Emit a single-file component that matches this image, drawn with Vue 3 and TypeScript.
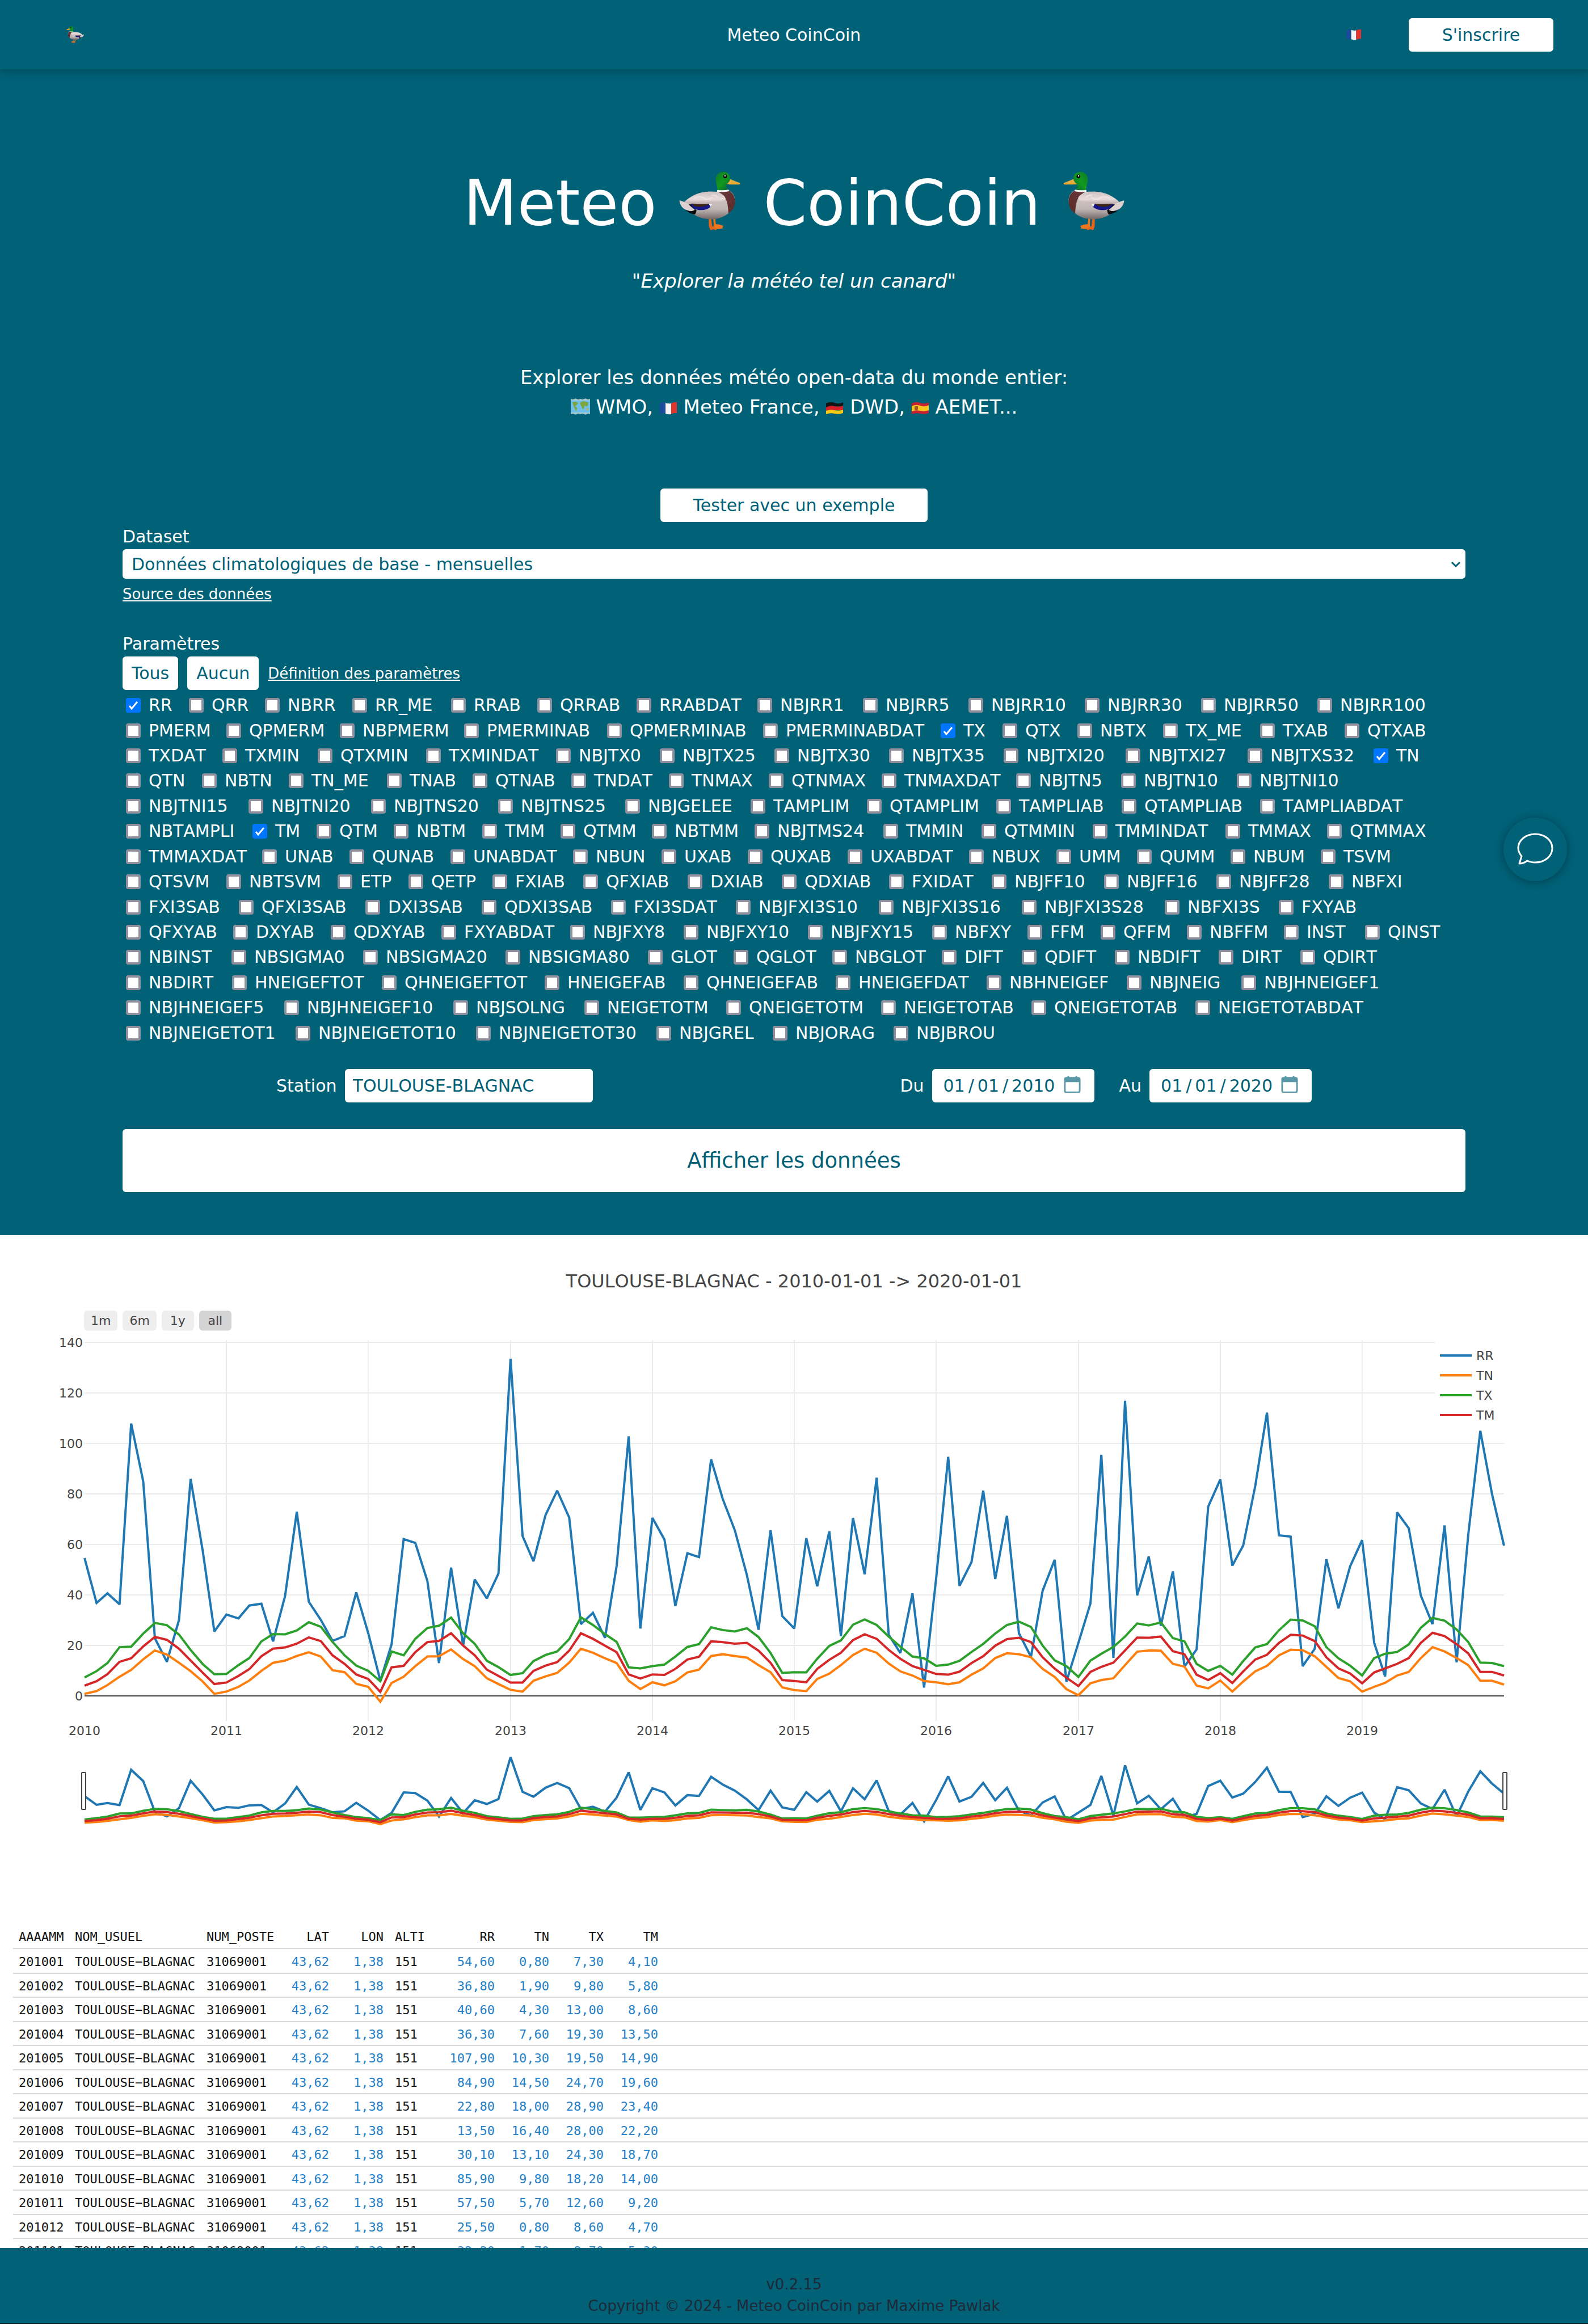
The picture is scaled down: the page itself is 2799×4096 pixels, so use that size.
<script setup lang="ts">
import { ref } from 'vue'

/* ---------- form ---------- */
const params: string[] = (
  'RR QRR NBRR RR_ME RRAB QRRAB RRABDAT NBJRR1 NBJRR5 NBJRR10 NBJRR30 NBJRR50 NBJRR100 ' +
  'PMERM QPMERM NBPMERM PMERMINAB QPMERMINAB PMERMINABDAT TX QTX NBTX TX_ME TXAB QTXAB ' +
  'TXDAT TXMIN QTXMIN TXMINDAT NBJTX0 NBJTX25 NBJTX30 NBJTX35 NBJTXI20 NBJTXI27 NBJTXS32 TN ' +
  'QTN NBTN TN_ME TNAB QTNAB TNDAT TNMAX QTNMAX TNMAXDAT NBJTN5 NBJTN10 NBJTNI10 ' +
  'NBJTNI15 NBJTNI20 NBJTNS20 NBJTNS25 NBJGELEE TAMPLIM QTAMPLIM TAMPLIAB QTAMPLIAB TAMPLIABDAT ' +
  'NBTAMPLI TM QTM NBTM TMM QTMM NBTMM NBJTMS24 TMMIN QTMMIN TMMINDAT TMMAX QTMMAX ' +
  'TMMAXDAT UNAB QUNAB UNABDAT NBUN UXAB QUXAB UXABDAT NBUX UMM QUMM NBUM TSVM ' +
  'QTSVM NBTSVM ETP QETP FXIAB QFXIAB DXIAB QDXIAB FXIDAT NBJFF10 NBJFF16 NBJFF28 NBFXI ' +
  'FXI3SAB QFXI3SAB DXI3SAB QDXI3SAB FXI3SDAT NBJFXI3S10 NBJFXI3S16 NBJFXI3S28 NBFXI3S FXYAB ' +
  'QFXYAB DXYAB QDXYAB FXYABDAT NBJFXY8 NBJFXY10 NBJFXY15 NBFXY FFM QFFM NBFFM INST QINST ' +
  'NBINST NBSIGMA0 NBSIGMA20 NBSIGMA80 GLOT QGLOT NBGLOT DIFT QDIFT NBDIFT DIRT QDIRT ' +
  'NBDIRT HNEIGEFTOT QHNEIGEFTOT HNEIGEFAB QHNEIGEFAB HNEIGEFDAT NBHNEIGEF NBJNEIG NBJHNEIGEF1 ' +
  'NBJHNEIGEF5 NBJHNEIGEF10 NBJSOLNG NEIGETOTM QNEIGETOTM NEIGETOTAB QNEIGETOTAB NEIGETOTABDAT ' +
  'NBJNEIGETOT1 NBJNEIGETOT10 NBJNEIGETOT30 NBJGREL NBJORAG NBJBROU'
).split(' ')

const selected = ref<string[]>(['RR', 'TX', 'TN', 'TM'])
const dataset = ref('mensuelles')
const station = ref('TOULOUSE-BLAGNAC')
const from = ref('2010-01-01')
const to = ref('2020-01-01')
const range = ref('all')
const ranges = ['1m', '6m', '1y', 'all']

// Character advances in thousandths of an em: the width of a choice follows its code.
const advance: Record<string, number> = {
  A: 684, B: 686, C: 698, D: 771, E: 632, F: 575, G: 775, H: 751, I: 421, J: 455, K: 693,
  L: 557, M: 843, N: 748, O: 787, P: 603, Q: 787, R: 695, S: 684, T: 616, U: 732, V: 684,
  X: 685, Y: 615, _: 636,
}
function choiceWidth(code: string): string {
  const em = [...code].reduce((sum, c) => sum + (advance[c] ?? 636), 0) / 1000
  return Math.round(em * 29.6 + 70) + 'px'
}

/* ---------- series, monthly from 2010-01 ---------- */
const RR = [
  54.6, 36.8, 40.6, 36.3, 107.9, 84.9, 22.8, 13.5, 30.1, 85.9, 57.5, 25.5,
  32.2, 30.7, 35.8, 36.5, 21.6, 39.6, 72.9, 37.3, 30.1, 21.8, 23.7, 41,
  24.8, 6, 20.4, 62.1, 60.6, 45.5, 13, 50.8, 20, 46.1, 38.6, 48.5,
  133.5, 63.3, 53.3, 71.6, 81.3, 70.6, 28.4, 32.9, 23, 51.5, 102.8, 26.7,
  70.5, 61.9, 35.6, 56.5, 55, 93.7, 78, 65.6, 47.9, 26.2, 65.6, 31.6,
  26.7, 62.5, 43.4, 65.1, 23.7, 70.5, 48.2, 86.4, 24.2, 17, 40.6, 3.3,
  46.7, 94.7, 43.6, 53, 81.3, 46.3, 71.3, 24.8, 15.5, 41.7, 53.9, 5.6,
  21, 36.6, 95.5, 15.1, 116.9, 39.8, 55.2, 27.8, 49.3, 11.6, 18.4, 75,
  85.7, 51.6, 59.6, 83.2, 112.2, 63.6, 63.1, 11.8, 18.7, 54.1, 34.7, 51.3,
  61.7, 21, 7.7, 72.7, 66.4, 39.7, 28.4, 67.5, 13.3, 64, 105, 80, 59.5,
]
const TN = [
  0.8, 1.9, 4.3, 7.6, 10.3, 14.5, 18, 16.4, 13.1, 9.8, 5.7, 0.8,
  1.7, 3.6, 6.1, 9.9, 13.1, 14, 15.8, 17.3, 15.6, 10.2, 9.4, 4.8,
  3.6, -2.3, 5.1, 7.6, 11.8, 15.6, 15.7, 18.4, 14.6, 11.8, 7, 4.7,
  2.4, 1.7, 6, 7.7, 9.1, 13.2, 18.7, 17.1, 14.9, 13, 6, 2.7,
  5.4, 4.2, 5.8, 9.3, 10.4, 15.8, 16.5, 15.8, 15.2, 12.2, 9.4, 3.4,
  2.3, 1.9, 6.7, 8.8, 12.2, 16.2, 18.7, 17.1, 12.8, 9.7, 8.1, 5.9,
  5.4, 4.6, 5.4, 8.4, 10.9, 15, 16.9, 16.5, 15.3, 10.7, 7.5, 2.7,
  0.3, 5, 6.3, 7, 12.2, 17.5, 18, 17.9, 12.7, 11.6, 4.1, 3,
  6.1, 1.7, 5.7, 9.7, 11.9, 16.1, 18.3, 18.1, 15.7, 11.5, 7.1, 5.8,
  1.7, 3.6, 5.2, 8.1, 9.5, 15, 19.3, 17.6, 15, 12.2, 6, 6, 4.5,
]
const TX = [
  7.3, 9.8, 13, 19.3, 19.5, 24.7, 28.9, 28, 24.3, 18.2, 12.6, 8.6,
  8.7, 12.2, 15, 21.6, 24.5, 24.4, 25.9, 29.2, 27.4, 21.4, 16.1, 12,
  9.9, 5.8, 17.6, 16.1, 22.6, 26.9, 27.8, 31, 24.8, 20.6, 13.9, 11.4,
  8.3, 9, 13.8, 16.2, 17.6, 22.5, 31.1, 28.1, 24.5, 21.4, 11.3, 10.9,
  11.8, 12.4, 15.6, 19.4, 20.5, 27.2, 26.1, 25.5, 26.8, 23.3, 17, 9.1,
  9.4, 9.3, 14.7, 19.8, 22, 28.2, 30.3, 28.1, 23.5, 19.5, 15.6, 14.9,
  11.9, 12.4, 13.9, 17.4, 20.6, 24.7, 28.1, 29.4, 27.3, 19.9, 14.1, 11.8,
  7.5, 14, 16.7, 19.4, 23.5, 28.7, 27.9, 29.1, 22.9, 21.6, 12.7, 9.9,
  11.9, 8.4, 13.8, 19.2, 20.5, 26, 30.2, 29.9, 27.6, 19.3, 14.9, 12,
  8.1, 15, 16.7, 17.4, 20.4, 27, 30.9, 29.8, 26.3, 21.3, 13.2, 13, 11.8,
]
const TM = [
  4.1, 5.8, 8.6, 13.5, 14.9, 19.6, 23.4, 22.2, 18.7, 14, 9.2, 4.7,
  5.3, 7.9, 10.6, 15.7, 18.7, 19.2, 20.7, 23.2, 21.7, 16.1, 12.7, 8.5,
  6.7, 1.6, 11.3, 11.9, 17.3, 21.3, 21.8, 24.8, 19.9, 16.1, 10.4, 7.9,
  5.3, 5.3, 9.9, 12, 13.4, 17.9, 24.8, 22.6, 19.9, 17.3, 8.5, 6.9,
  8.5, 8.3, 10.7, 14.4, 15.5, 21.6, 21.3, 20.7, 21, 17.9, 13.1, 6.3,
  5.9, 5.4, 10.7, 14.3, 17.1, 22.1, 24.4, 22.6, 18.2, 14.7, 11.8, 10.3,
  8.7, 8.4, 9.6, 13, 15.7, 19.9, 22.5, 23, 21.3, 15.3, 10.8, 7.2,
  3.9, 9.5, 11.5, 13.2, 18, 23.1, 23, 23.5, 17.7, 16.5, 8.4, 6.3,
  9, 5.1, 9.7, 14.4, 16.3, 21, 24.2, 23.9, 21.7, 15.3, 10.9, 8.9,
  5, 9.3, 10.9, 12.7, 15, 21, 25, 23.7, 20.5, 16.8, 9.5, 9.5, 8.1,
]
const series = [
  { name: 'RR', color: '#1f77b4', data: RR },
  { name: 'TN', color: '#ff7f0e', data: TN },
  { name: 'TX', color: '#2ca02c', data: TX },
  { name: 'TM', color: '#d62728', data: TM },
]

/* ---------- scales ---------- */
const left = 149
const right = 2651
const t0 = Date.UTC(2010, 0, 1)
const t1 = Date.UTC(2020, 0, 1)
const x = (t: number): number => left + ((t - t0) / (t1 - t0)) * (right - left)
const y = (v: number): number => 639 - v * 4.45
const ySmall = (v: number): number => 863 - v * 0.869

function line(data: number[], scale: (v: number) => number): string {
  return data.map((v, i) => x(Date.UTC(2010, i, 1)).toFixed(1) + ',' + scale(v).toFixed(1)).join(' ')
}
const years = Array.from({ length: 10 }, (_, i) => ({ label: 2010 + i, x: Math.round(x(Date.UTC(2010 + i, 0, 1))) }))
const ticks = [20, 40, 60, 80, 100, 120, 140]

/* ---------- table ---------- */
const fmt = (v: number): string => v.toFixed(2).replace('.', ',')
const rows = Array.from({ length: 13 }, (_, i) => ({
  month: String(2010 + Math.floor(i / 12)) + String((i % 12) + 1).padStart(2, '0'),
  values: [RR[i], TN[i], TX[i], TM[i]].map(fmt),
}))
</script>

<template>
  <div class="page">
    <svg class="defs" aria-hidden="true">
      <defs>
        <linearGradient id="head" x1="0" y1="0" x2="1" y2="1">
          <stop offset="0" stop-color="#0f7a2a" /><stop offset=".5" stop-color="#129a1e" /><stop offset="1" stop-color="#045a42" />
        </linearGradient>
        <linearGradient id="chest" x1="0" y1="0" x2="1" y2="1">
          <stop offset="0" stop-color="#6b3a3c" /><stop offset="1" stop-color="#5a2a28" />
        </linearGradient>
        <linearGradient id="belly" x1="0" y1="0" x2="0" y2="1">
          <stop offset="0" stop-color="#d8cfcd" /><stop offset=".65" stop-color="#bfb6b3" /><stop offset="1" stop-color="#75696a" />
        </linearGradient>
        <linearGradient id="wing" x1="0" y1="0" x2="0" y2="1">
          <stop offset="0" stop-color="#cfc2c3" /><stop offset=".6" stop-color="#e6dadb" /><stop offset="1" stop-color="#b9a7a7" />
        </linearGradient>
        <symbol id="duck" viewBox="32 30 352 344">
          <path d="M202 300l14 2 6 44 12 6 18 8-8 10-16-6-16 6-9-22z" fill="#e8641b" />
          <path d="M228 298l12 1 3 36 22 2 22 8-6 8 4 6-30 4-26-12 2-14z" fill="#f0761f" />
          <path d="M246 148C210 146 160 146 120 166C96 178 76 190 62 206C64 240 96 270 132 288C170 308 236 314 284 292C330 270 352 236 354 200C354 176 340 150 318 140z" fill="url(#belly)" />
          <path d="M254 146L318 140C344 156 356 184 354 208C352 236 338 260 316 273C314 240 312 210 298 184C288 166 270 156 254 146z" fill="url(#chest)" />
          <path d="M33 198C60 204 84 214 100 234C112 246 122 252 128 258C100 264 74 256 56 244C40 230 34 214 33 198z" fill="#ddd0d0" />
          <path d="M66 254C90 262 110 262 122 252L86 222L98 220L132 256L124 278C110 280 88 270 66 254z" fill="#0a0a0c" />
          <path d="M96 218C130 224 170 222 206 218L216 232C190 258 142 260 112 242z" fill="#15178a" />
          <path d="M100 216L204 216C190 236 146 240 118 230z" fill="#3c2417" />
          <path d="M202 216L222 218L212 236z" fill="#f2ecec" />
          <path d="M62 208C90 180 140 150 200 147C250 146 296 162 298 186C298 206 240 212 200 218C150 222 100 220 62 208z" fill="url(#wing)" />
          <path d="M120 184q30-16 58 2M180 190q20 6 40-8M222 168q20-2 30 10" fill="none" stroke="#f3eaea" stroke-width="9" stroke-linecap="round" opacity=".6" />
          <path d="M252 146C256 120 240 96 243 72C246 46 266 32 288 33C314 34 328 54 326 78C324 98 306 100 304 112C304 122 312 132 318 142C296 148 272 148 252 146z" fill="url(#head)" />
          <path d="M252 137C274 140 296 140 316 136L322 144C300 150 272 150 250 147z" fill="#f4f4f4" />
          <path d="M326 74C340 82 364 90 382 97C384 102 382 106 374 106C352 106 326 108 306 104C316 96 324 86 326 74z" fill="#e6ac3c" />
          <circle cx="297" cy="59" r="11" fill="#050505" /><circle cx="296" cy="56" r="4" fill="#fff" />
        </symbol>
        <symbol id="fr" viewBox="0 0 32 23">
          <path d="M1 3Q6 0 11 2V21Q6 19 1 22z" fill="#1b4a9c" /><path d="M11 2Q16 4 21 3V22Q16 23 11 21z" fill="#f4f4f4" /><path d="M21 3Q26 0 31 1V20Q26 19 21 22z" fill="#e0352f" />
        </symbol>
        <symbol id="de" viewBox="0 0 32 23">
          <path d="M1 3Q8 -1 16 2T31 1V7Q24 9 16 8T1 10z" fill="#141414" /><path d="M1 10Q8 6 16 8T31 7V14Q24 16 16 15T1 16z" fill="#d81f26" /><path d="M1 16Q8 13 16 15T31 14V20Q24 23 16 21T1 22z" fill="#f7c912" />
        </symbol>
        <symbol id="es" viewBox="0 0 32 23">
          <path d="M1 3Q8 -1 16 2T31 1V20Q24 23 16 21T1 22z" fill="#c8202f" /><path d="M1 8Q8 4 16 7T31 6V15Q24 18 16 16T1 17z" fill="#f7c61b" /><path d="M6 8h6v6q-3 3-6 0z" fill="#a8542a" />
        </symbol>
        <symbol id="map" viewBox="0 0 36 30">
          <path d="M0 1Q5 3 9 0Q14 3 18 1Q23 3 27 0Q32 3 36 1V29Q32 27 27 30Q23 27 18 29Q14 27 9 30Q5 27 0 29z" fill="#6fc0ea" />
          <path d="M0 1Q5 3 9 0Q14 3 18 1Q23 3 27 0Q32 3 36 1V4H0zM0 26H36V29Q32 27 27 30Q23 27 18 29Q14 27 9 30Q5 27 0 29z" fill="#a9c9cf" />
          <path d="M3 7l7-1 4 3-4 4-2 1 4 4-2 6-3-6-2-5zM17 8l6-3 9 2 1 5-4 3-3-2-1 5-3 2-3-7z" fill="#7da63c" /><circle cx="31" cy="20" r="2" fill="#c9b04a" />
        </symbol>
      </defs>
    </svg>

    <header class="bar">
      <a href="#" class="home" aria-label="Accueil"><svg class="flip" width="33" height="30"><use href="#duck" /></svg></a>
      <span>Meteo CoinCoin</span>
      <div class="tools">
        <button class="lang" aria-label="Français"><svg width="28" height="20"><use href="#fr" /></svg></button>
        <button class="btn signup">S'inscrire</button>
      </div>
    </header>

    <main>
      <section class="hero">
        <h1>
          <span>Meteo</span><svg width="108" height="105"><use href="#duck" /></svg><span>CoinCoin</span><svg class="flip" width="108" height="105"><use href="#duck" /></svg>
        </h1>
        <p class="tagline">"Explorer la météo tel un canard"</p>
        <p class="intro">
          Explorer les données météo open-data du monde entier:<br />
          <svg width="34" height="29"><use href="#map" /></svg> WMO,
          <svg width="32" height="23"><use href="#fr" /></svg> Meteo France,
          <svg width="32" height="23"><use href="#de" /></svg> DWD,
          <svg width="32" height="23"><use href="#es" /></svg> AEMET...
        </p>
        <button class="btn example">Tester avec un exemple</button>

        <form class="form" @submit.prevent>
          <label class="title" for="dataset">Dataset</label>
          <div class="select">
            <select id="dataset" v-model="dataset">
              <option value="mensuelles">Données climatologiques de base - mensuelles</option>
            </select>
            <svg width="18" height="12" viewBox="0 0 18 12"><path d="M2 2l7 7 7-7" fill="none" stroke="#006177" stroke-width="3" /></svg>
          </div>
          <a href="#" class="source">Source des données</a>

          <p class="title params-title">Paramètres</p>
          <div class="actions">
            <button type="button" class="btn small" @click="selected = [...params]">Tous</button>
            <button type="button" class="btn small" @click="selected = []">Aucun</button>
            <a href="#">Définition des paramètres</a>
          </div>
          <div class="params">
            <label v-for="p in params" :key="p" :style="{ width: choiceWidth(p) }">
              <input v-model="selected" type="checkbox" :value="p" /><span>{{ p }}</span>
            </label>
          </div>

          <div class="filters">
            <div class="field">
              <label for="station">Station</label>
              <input id="station" v-model="station" class="text" type="text" />
            </div>
            <div class="dates">
              <div class="field">
                <label for="from">Du</label>
                <input id="from" v-model="from" class="date" type="date" />
              </div>
              <div class="field">
                <label for="to">Au</label>
                <input id="to" v-model="to" class="date" type="date" />
              </div>
            </div>
          </div>
          <button class="btn submit">Afficher les données</button>
        </form>
      </section>

      <section class="chart">
        <h2>{{ station }} - {{ from }} -&gt; {{ to }}</h2>
        <div class="ranges">
          <button v-for="r in ranges" :key="r" :class="{ on: r === range }" @click="range = r">{{ r }}</button>
        </div>
        <svg class="plot" viewBox="0 0 2799 920" role="img" aria-label="Séries mensuelles">
          <g stroke="#ebebeb" stroke-width="2">
            <line v-for="v in ticks" :key="v" :x1="left" :x2="right" :y1="y(v)" :y2="y(v)" />
            <line v-for="t in years.slice(1)" :key="t.label" :x1="t.x" :x2="t.x" y1="12" y2="683" />
          </g>
          <line :x1="left" :x2="right" :y1="y(0)" :y2="y(0)" stroke="#444" stroke-width="2" />
          <g fill="none" stroke-width="4" stroke-miterlimit="2">
            <polyline v-for="s in series" :key="s.name" :points="line(s.data, y)" :stroke="s.color" />
            <polyline v-for="s in series" :key="s.name" :points="line(s.data, ySmall)" :stroke="s.color" />
          </g>
          <g fill="#fff" stroke="#444" stroke-width="2">
            <rect x="144" y="774" width="7" height="65" rx="1" />
            <rect x="2649" y="774" width="7" height="65" rx="1" />
          </g>
          <rect x="2529" y="12" width="122" height="152" fill="#fff" />
          <g class="tick">
            <text v-for="v in [0, ...ticks]" :key="v" x="146" :y="y(v) + 8" text-anchor="end">{{ v }}</text>
            <text v-for="t in years" :key="t.label" :x="t.x" y="708" text-anchor="middle">{{ t.label }}</text>
            <g v-for="(s, i) in series" :key="s.name">
              <line x1="2538" x2="2594" :y1="39 + i * 35" :y2="39 + i * 35" :stroke="s.color" stroke-width="4" />
              <text x="2602" :y="47 + i * 35">{{ s.name }}</text>
            </g>
          </g>
        </svg>
      </section>

      <section class="data">
        <table>
          <colgroup>
            <col class="c-month" /><col class="c-name" /><col class="c-post" /><col class="c-lat" /><col class="c-val" />
            <col class="c-alt" /><col class="c-val" /><col class="c-val" /><col class="c-val" /><col class="c-val" /><col />
          </colgroup>
          <thead>
            <tr>
              <th>AAAAMM</th><th>NOM_USUEL</th><th>NUM_POSTE</th><th class="num">LAT</th><th class="num">LON</th><th>ALTI</th>
              <th v-for="s in series" :key="s.name" class="num">{{ s.name }}</th><th></th>
            </tr>
          </thead>
          <tbody>
            <tr v-for="r in rows" :key="r.month">
              <td>{{ r.month }}</td><td>TOULOUSE−BLAGNAC</td><td>31069001</td><td class="num">43,62</td><td class="num">1,38</td><td>151</td>
              <td v-for="(v, i) in r.values" :key="i" class="num">{{ v }}</td><td></td>
            </tr>
          </tbody>
        </table>
      </section>
    </main>

    <footer>
      <p>v0.2.15</p>
      <p>Copyright © 2024 - Meteo CoinCoin par Maxime Pawlak</p>
    </footer>

    <button class="chat" aria-label="Discuter">
      <svg width="64" height="58" viewBox="0 0 64 58">
        <path d="M4 54L8 41C3 35 2 31 2 27C2 13 15 2 32 2S62 13 62 27S49 52 32 52C27 52 22 51 18 49C14 52 9 54 4 54Z" fill="none" stroke="#fff" stroke-width="3" stroke-linejoin="round" />
      </svg>
    </button>
  </div>
</template>

<style>
body { margin: 0; background: #fff; }
</style>

<style scoped>
.page { font-family: Verdana, "DejaVu Sans", sans-serif; font-size: 30px; color: #fff; position: relative; }
.page * { box-sizing: border-box; }
.defs { position: absolute; width: 0; height: 0; }
h1, h2, p { margin: 0; font-weight: 400; }
a { color: #fff; }
button, input, select { font: inherit; margin: 0; border: 0; }
.flip { transform: scaleX(-1); }

.btn { height: 59px; border-radius: 6px; background: #fff; color: #006177; padding: 0; text-align: center; }

.bar {
  position: relative; z-index: 1; height: 122px; padding: 0 61px;
  display: grid; grid-template-columns: 1fr auto 1fr; align-items: center;
  background: #006177; box-shadow: 0 4px 16px rgba(0, 0, 0, .25);
}
.home { display: flex; padding-left: 55px; }
.tools { display: flex; justify-content: flex-end; align-items: center; gap: 83px; }
.lang { background: none; padding: 0; display: flex; }
.signup { width: 255px; }

.hero { background: #006177; padding: 171px 216px 76px; display: flex; flex-direction: column; align-items: center; }
h1 { display: flex; align-items: flex-start; gap: 40px; font-size: 110px; line-height: 130px; }
h1 svg { margin-top: 9px; }
.tagline { margin-top: 52px; font-size: 34px; line-height: 40px; font-style: italic; }
.intro { margin-top: 124px; font-size: 34px; line-height: 52px; text-align: center; }
.intro svg { vertical-align: -2px; }
.example { margin-top: 118px; width: 471px; }

.form { align-self: stretch; margin-top: 8px; display: flex; flex-direction: column; align-items: stretch; }
.title { line-height: 36px; }
.select { position: relative; margin-top: 4px; }
.select select {
  appearance: none; width: 100%; height: 52px; padding: 0 16px; border-radius: 6px; background: #fff; color: #006177; display: block;
}
.select svg { position: absolute; right: 8px; top: 21px; }
.source { align-self: flex-start; margin-top: 11px; font-size: 26px; line-height: 32px; }
.params-title { margin-top: 54px; }
.actions { margin-top: 4px; display: flex; align-items: center; gap: 16px; }
.actions a { font-size: 26px; line-height: 32px; }
.small { padding: 0 16px; }
.params {
  margin-top: 5px; min-height: 622px; display: flex; flex-wrap: wrap; align-content: stretch;
  line-height: 44px; font-kerning: none;
}
.params label { display: flex; align-items: center; white-space: nowrap; }
.params input {
  appearance: none; flex: none; width: 26px; height: 26px; margin: 0 14px 0 6px;
  border: 4px solid #8f8f9d; border-radius: 4px; background: #fff;
}
.params input:checked {
  border-color: #0075ff;
  background: #0075ff url("data:image/svg+xml,%3Csvg xmlns='http://www.w3.org/2000/svg' viewBox='0 0 18 18'%3E%3Cpath d='M2 10l4 5L16 3' fill='none' stroke='%23fff' stroke-width='3'/%3E%3C/svg%3E") center / 18px 18px no-repeat;
}

.filters { margin-top: 41px; display: flex; justify-content: space-around; }
.field { display: flex; align-items: center; gap: 14px; }
.dates { display: flex; gap: 44px; }
.text, .date { height: 59px; border-radius: 6px; background: #fff; color: #006177; }
.text { width: 437px; padding: 0 14px; font-kerning: none; }
.date { width: 286px; padding: 0 24px 0 20px; }
.date::-webkit-datetime-edit-fields-wrapper { display: flex; gap: 6px; padding: 0; }
.date::-webkit-datetime-edit-month-field,
.date::-webkit-datetime-edit-day-field,
.date::-webkit-datetime-edit-year-field { padding: 0; }
.date::-webkit-calendar-picker-indicator {
  margin: 0 0 6px; padding: 0; width: 30px; height: 30px; opacity: 1;
  background: url("data:image/svg+xml,%3Csvg xmlns='http://www.w3.org/2000/svg' viewBox='0 0 32 32'%3E%3Cpath d='M2 7q0-3 3-3h22q3 0 3 3v21q0 3-3 3H5q-3 0-3-3z' fill='none' stroke='%235a98a8' stroke-width='3'/%3E%3Cpath d='M1 4h30v8H1zM7 0h3v5H7zM22 0h3v5h-3z' fill='%235a98a8'/%3E%3C/svg%3E") center / contain no-repeat;
}
.submit { margin-top: 47px; height: 111px; font-size: 37px; }

.chart { padding-top: 61px; color: #444; }
h2 { text-align: center; font-size: 32px; line-height: 40px; font-kerning: none; }
.ranges { margin: 32px 0 5px 148px; display: flex; gap: 9px; }
.ranges button { height: 35px; min-width: 57px; padding: 0 12px; border-radius: 6px; background: #eee; color: #444; font-size: 22px; line-height: 32px; }
.ranges button.on { background: #d4d4d4; }
.plot { display: block; width: 100%; }
.tick text { font-size: 22px; fill: #444; }

.data { margin: 122px 0 0 23px; height: 570px; overflow: hidden; color: #111; }
table { width: 100%; table-layout: fixed; border-collapse: collapse; font-family: Menlo, "DejaVu Sans Mono", monospace; font-size: 22px; }
tr { height: 42px; border-bottom: 2px solid #dadada; }
tbody tr:nth-child(odd) { height: 43px; }
tbody tr:first-child { height: 44px; }
th, td { padding: 2px 10px 0; text-align: left; font-weight: 400; white-space: nowrap; }
th.num, td.num { text-align: right; padding-left: 0; }
td.num { color: #2380c8; }
.c-month { width: 99px; }
.c-name { width: 232px; }
.c-post { width: 144px; }
.c-lat { width: 92px; }
.c-alt { width: 100px; }
.c-val { width: 96px; }

footer {
  background: #006177; color: #1f2937; height: 134px; padding-top: 45px; text-align: center;
  font-size: 26px; line-height: 38px; border-bottom: 1px solid #000;
}

.chat {
  position: absolute; top: 1441px; right: 37px; width: 112px; height: 112px; padding: 0; border-radius: 50%;
  background: #006177; box-shadow: 0 2px 16px rgba(0, 0, 0, .35); display: flex; align-items: center; justify-content: center;
}
</style>
